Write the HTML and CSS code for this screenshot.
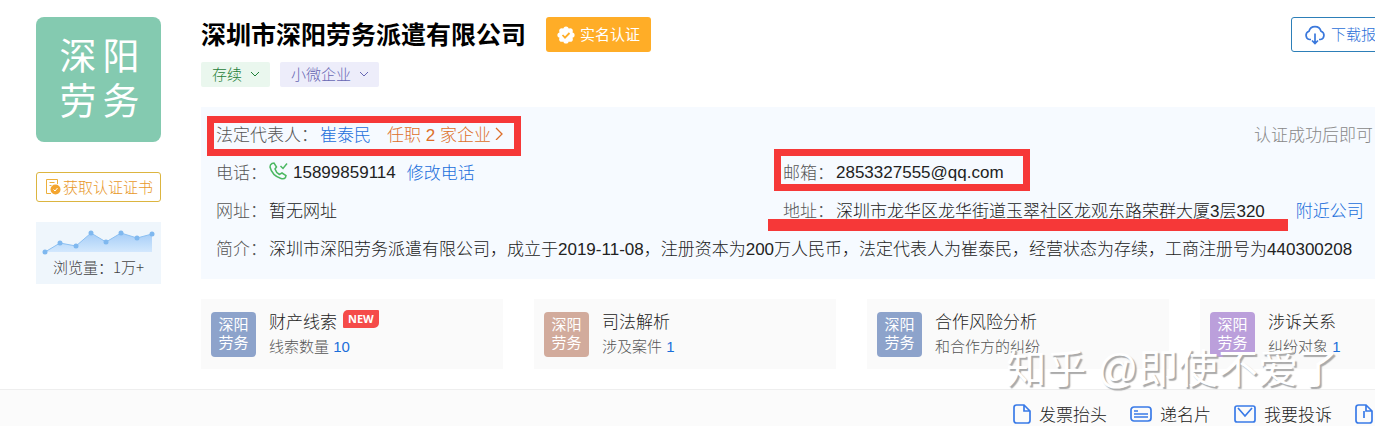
FILE: index.html
```
<!DOCTYPE html>
<html lang="zh-CN">
<head>
    <meta charset="UTF-8">
    <meta name="viewport" content="width=device-width, initial-scale=1.0">
    <title>深圳市深阳劳务派遣有限公司</title>
    <link rel="stylesheet" href="styles.css">
</head>
<body>

    <div class="company">
        <aside class="side">
            <div class="logo"><span>深</span><span>阳</span><span>劳</span><span>务</span></div>
            <button class="cert-btn">
                <svg width="17" height="17" viewBox="0 0 17 17" fill="none" stroke="#edb03c">
                    <path d="M13.500 6V1.500H2.500V15.500H7M5.500 4.500h5M5.500 7.500h2"/>
                    <circle cx="11.500" cy="11.500" r="5" fill="#f3a52f" stroke="none"/>
                    <path d="M9.500 11.500l1.500 1.500 2.500-3" stroke="#fff"/>
                </svg>
                获取认证证书
            </button>
            <div class="views">
                <svg width="125" height="34" viewBox="0 0 125 34">
                    <defs>
                        <linearGradient id="area" x1="0" y1="0" x2="0" y2="1">
                            <stop offset="0" stop-color="#a5cdf7"/>
                            <stop offset="1" stop-color="#d3e8fd"/>
                        </linearGradient>
                    </defs>
                    <path d="M9 30L24 21 40 24 55 11 70 20 85 11 101 16 116 12V30Z" fill="url(#area)"/>
                    <path d="M9 30L24 21 40 24 55 11 70 20 85 11 101 16 116 12" fill="none" stroke="#8cc0f2"/>
                    <g fill="#7fb8ef">
                        <circle cx="9" cy="30" r="2.500"/><circle cx="24" cy="21" r="2.500"/>
                        <circle cx="40" cy="24" r="2.500"/><circle cx="55" cy="11" r="2.500"/>
                        <circle cx="70" cy="20" r="2.500"/><circle cx="85" cy="11" r="2.500"/>
                        <circle cx="101" cy="16" r="2.500"/><circle cx="116" cy="12" r="2.500"/>
                    </g>
                </svg>
                <div class="views-text">浏览量：1万+</div>
            </div>
        </aside>

        <main class="main">
            <div class="head">
                <h1>深圳市深阳劳务派遣有限公司</h1>
                <span class="verified">
                    <svg width="18" height="18" viewBox="0 0 18 18">
                        <g fill="#fff">
                            <circle cx="9" cy="9" r="7"/>
                            <circle cx="9" cy="3" r="2.600"/><circle cx="13.200" cy="4.800" r="2.600"/>
                            <circle cx="15" cy="9" r="2.600"/><circle cx="13.200" cy="13.200" r="2.600"/>
                            <circle cx="9" cy="15" r="2.600"/><circle cx="4.800" cy="13.200" r="2.600"/>
                            <circle cx="3" cy="9" r="2.600"/><circle cx="4.800" cy="4.800" r="2.600"/>
                        </g>
                        <path d="M5.500 9l2.500 2.600 4.500-4.600" fill="none" stroke="#ffad27" stroke-width="1.800"/>
                    </svg>
                    <span class="btn-text">实名认证</span>
                </span>
                <button class="download">
                    <svg width="22" height="20" viewBox="0 0 22 20" fill="none" stroke="#3a78dc" stroke-width="1.700">
                        <path d="M7 14.500H5.500A4.300 4.300 0 0 1 5 6.200 6.200 6.200 0 0 1 17 6.200 4.300 4.300 0 0 1 16.500 14.500H15M11 8.500v10M8 15.500l3 3 3-3"/>
                    </svg>
                    <span class="btn-text">下载报告</span>
                </button>
            </div>

            <div class="tags">
                <button class="tag tag-green">存续
                    <svg width="10" height="6" viewBox="0 0 10 6" fill="none" stroke="currentColor"><path d="M1 1l4 4 4-4"/></svg>
                </button>
                <button class="tag tag-purple">小微企业
                    <svg width="10" height="6" viewBox="0 0 10 6" fill="none" stroke="currentColor"><path d="M1 1l4 4 4-4"/></svg>
                </button>
            </div>

            <section class="info">
                <div class="row">
                    <span class="label">法定代表人：</span>
                    <a href="#" class="person">崔泰民</a>
                    <a href="#" class="jobs">任职 2 家企业
                        <svg width="8" height="14" viewBox="0 0 8 14" fill="none" stroke="currentColor" stroke-width="1.300"><path d="M1 2l6 6-6 6"/></svg>
                    </a>
                    <span class="notice">认证成功后即可</span>
                </div>
                <div class="row row-split">
                    <div class="cell">
                        <span class="label">电话：</span>
                        <svg width="19" height="18" viewBox="0 0 19 18" fill="none" stroke="#4cb862" stroke-width="1.500">
                            <path d="M3 1.500L5 1 7.500 5 6 7Q7 10.500 10.500 12.500L13 11 17 13.500 16.500 15.500Q15 17.500 12 16.500 3 13.500 1 5 1 2.500 3 1.500ZM11.500 4l2.500 2.500L18 1.500"/>
                        </svg>
                        <span class="phone">15899859114</span>
                        <a href="#">修改电话</a>
                    </div>
                    <div class="cell">
                        <span class="label">邮箱：</span>
                        <span class="latin">2853327555@qq.com</span>
                    </div>
                </div>
                <div class="row row-split">
                    <div class="cell">
                        <span class="label">网址：</span>
                        <span>暂无网址</span>
                    </div>
                    <div class="cell">
                        <span class="label">地址：</span>
                        <span>深圳市龙华区龙华街道玉翠社区龙观东路荣群大厦3层320</span>
                        <a href="#" class="nearby">附近公司</a>
                    </div>
                </div>
                <div class="row">
                    <span class="label">简介：</span>
                    <span>深圳市深阳劳务派遣有限公司，成立于2019-11-08，注册资本为200万人民币，法定代表人为崔泰民，经营状态为存续，工商注册号为440300208</span>
                </div>
                <div class="mark mark-person"></div>
                <div class="mark mark-mail"></div>
                <div class="mark mark-address"></div>
            </section>

            <section class="cards">
                <div class="card">
                    <div class="mini blue">深阳<br>劳务</div>
                    <div>
                        <div class="card-title">财产线索<span class="new">NEW</span></div>
                        <div class="card-sub">线索数量 <b>10</b></div>
                    </div>
                </div>
                <div class="card">
                    <div class="mini brown">深阳<br>劳务</div>
                    <div>
                        <div class="card-title">司法解析</div>
                        <div class="card-sub">涉及案件 <b>1</b></div>
                    </div>
                </div>
                <div class="card">
                    <div class="mini blue">深阳<br>劳务</div>
                    <div>
                        <div class="card-title">合作风险分析</div>
                        <div class="card-sub">和合作方的纠纷</div>
                    </div>
                </div>
                <div class="card">
                    <div class="mini purple">深阳<br>劳务</div>
                    <div>
                        <div class="card-title">涉诉关系</div>
                        <div class="card-sub">纠纷对象 <b>1</b></div>
                    </div>
                </div>
            </section>
        </main>
    </div>

    <footer class="tools">
        <a href="#">
            <svg width="18" height="20" viewBox="0 0 18 20"><path d="M3.500 1H11L17 7V16.500Q17 19 14.500 19H3.500Q1 19 1 16.500V3.500Q1 1 3.500 1ZM11 1V7H17"/></svg>
            发票抬头
        </a>
        <a href="#">
            <svg width="22" height="16" viewBox="0 0 22 16"><rect x="1" y="1" width="20" height="14" rx="3"/><path d="M4 5h4M4 8h14M4 11h14"/></svg>
            递名片
        </a>
        <a href="#">
            <svg width="22" height="18" viewBox="0 0 22 18"><rect x="1" y="1" width="20" height="16" rx="2"/><path d="M4 3l7 8 7-8"/></svg>
            我要投诉
        </a>
        <a href="#" aria-label="file">
            <svg width="18" height="20" viewBox="0 0 18 20"><path d="M3.500 1H11L17 7V16.500Q17 19 14.500 19H3.500Q1 19 1 16.500V3.500Q1 1 3.500 1ZM11 1V7H17M9 7v7"/></svg>
        </a>
    </footer>

    <div class="watermark">知乎 @即使不爱了</div>

</body>
</html>
```
FILE: styles.css
```
* {
    box-sizing: border-box;
}

body {
    margin: 0;
    position: relative;
    overflow: hidden;
    background-color: #fff;
    color: #222;
    font-family: "Liberation Sans", "Noto Sans CJK SC", sans-serif;
    font-size: 17px;
    font-weight: 300;
}

a {
    color: #1a6edb;
    text-decoration: none;
}

button {
    font-family: inherit;
    font-weight: inherit;
    cursor: pointer;
}

svg {
    flex: none;
}

.company {
    display: flex;
    gap: 40px;
    padding: 17px 0 20px 36px;
}

/* left column */
.side {
    flex: none;
    width: 125px;
}

.logo {
    display: grid;
    grid-template-columns: 38px 38px;
    grid-auto-rows: 45px;
    column-gap: 5px;
    place-content: center;
    height: 125px;
    padding-left: 2px;
    border-radius: 8px;
    background-color: #84cab0;
    color: #fff;
    font-size: 37px;
    font-weight: 400;
    line-height: 45px;
    text-align: center;
}

.cert-btn {
    display: flex;
    align-items: center;
    justify-content: center;
    gap: 2px;
    width: 100%;
    height: 30px;
    margin-top: 30px;
    padding: 0 0 2px;
    border: 1px solid #dcb540;
    border-radius: 3px;
    background-color: #fff;
    color: #e8982a;
    font-size: 15px;
    white-space: nowrap;
}

.views {
    height: 62px;
    margin-top: 20px;
    background-color: #eff6fc;
}

.views svg {
    display: block;
}

.views-text {
    font-family: "Noto Sans CJK SC", sans-serif;
    font-size: 15px;
    line-height: 22px;
    text-align: center;
    color: #444;
}

/* right column */
.main {
    flex: 1;
    min-width: 0;
}

.head {
    display: flex;
    align-items: center;
    gap: 20px;
    height: 35px;
}

h1 {
    margin: 0;
    padding-bottom: 3px;
    color: #000;
    font-size: 25px;
    font-weight: 700;
    white-space: nowrap;
}

.verified {
    display: flex;
    align-items: center;
    gap: 5px;
    height: 35px;
    padding: 0 11px;
    border-radius: 3px;
    background-color: #ffad27;
    color: #fff;
    font-size: 15px;
    font-weight: 400;
}

.btn-text {
    padding-bottom: 3px;
}

.download {
    display: flex;
    flex: none;
    align-items: center;
    gap: 5px;
    height: 35px;
    margin-left: auto;
    margin-right: -28px;
    padding: 0 11px 0 12px;
    border: 1px solid #2d7fb8;
    border-radius: 3px;
    background-color: #fff;
    color: #2b6fd8;
    font-size: 15px;
}

.tags {
    display: flex;
    gap: 10px;
    margin-top: 10px;
}

.tag {
    display: flex;
    align-items: center;
    gap: 8px;
    height: 25px;
    padding: 0 10px 2px 11px;
    border: 0;
    border-radius: 2px;
    font-size: 15px;
}

.tag-green {
    background-color: #eaf7ee;
    color: #1f8038;
}

.tag-purple {
    background-color: #ededfa;
    color: #6868b4;
}

.info {
    position: relative;
    margin-top: 20px;
    padding: 7px 0 13px 15px;
    background-color: #f6faff;
    white-space: nowrap;
}

.row {
    display: flex;
    align-items: center;
    gap: 2px;
    height: 38px;
}

.row-split {
    display: grid;
    grid-template-columns: 567px 1fr;
    gap: 0;
}

.cell {
    display: flex;
    align-items: center;
    gap: 2px;
}

.label {
    color: #555;
}

.person {
    margin-right: 14px;
}

.jobs {
    display: flex;
    align-items: center;
    gap: 4px;
    color: #dd6f2a;
}

.notice {
    margin-left: auto;
    padding-right: 2px;
    color: #888;
}

.phone,
.latin {
    padding-top: 3px;
}

.phone {
    margin: 0 9px 0 3px;
}

.nearby {
    margin-left: 29px;
}

/* red highlights over the panel */
.mark {
    position: absolute;
    border: 7px solid #f63838;
}

.mark-person {
    top: 9px;
    left: 6px;
    width: 314px;
    height: 40px;
}

.mark-mail {
    top: 42px;
    left: 573px;
    width: 256px;
    height: 42px;
}

.mark-address {
    top: 112px;
    left: 567px;
    width: 520px;
    height: 12px;
    border-width: 6px;
}

.cards {
    display: grid;
    grid-template-columns: repeat(4, 302px);
    gap: 31px;
    margin-top: 20px;
}

.card {
    display: flex;
    align-items: center;
    gap: 13px;
    height: 70px;
    padding: 0 10px;
    background-color: #fafafa;
}

.mini {
    width: 45px;
    height: 45px;
    padding-top: 4px;
    border-radius: 4px;
    color: #fff;
    font-size: 15px;
    font-weight: 400;
    line-height: 18px;
    text-align: center;
}

.blue {
    background-color: #8da3cb;
}

.brown {
    background-color: #d2ab9c;
}

.purple {
    background-color: #bb9fdb;
}

.card-title {
    display: flex;
    line-height: 25px;
}

.new {
    height: 18px;
    margin-left: 6px;
    padding: 0 5px;
    border-radius: 5px 1px 5px 1px;
    background-color: #f54b49;
    color: #fff;
    font-family: "Noto Sans", sans-serif;
    font-size: 11px;
    font-weight: 700;
    line-height: 18px;
}

.card-sub {
    color: #555;
    font-size: 15px;
    line-height: 24px;
}

.card-sub b {
    color: #1a6edb;
    font-weight: 300;
}

.tools {
    display: flex;
    align-items: center;
    justify-content: flex-end;
    gap: 23px;
    height: 50px;
    padding: 0 2px 2px 0;
    border-top: 1px solid #eee;
    background-color: #fbfbfb;
}

.tools a {
    display: flex;
    align-items: center;
    gap: 8px;
    color: #222;
}

.tools svg {
    fill: none;
    stroke: #3a7be8;
    stroke-width: 1.7;
}

.watermark {
    position: absolute;
    top: 341px;
    right: 37px;
    color: #fff;
    font-size: 40px;
    font-weight: 400;
    line-height: 56px;
    text-shadow: 2px 2px 1px #aaa;
    white-space: pre;
}
```
